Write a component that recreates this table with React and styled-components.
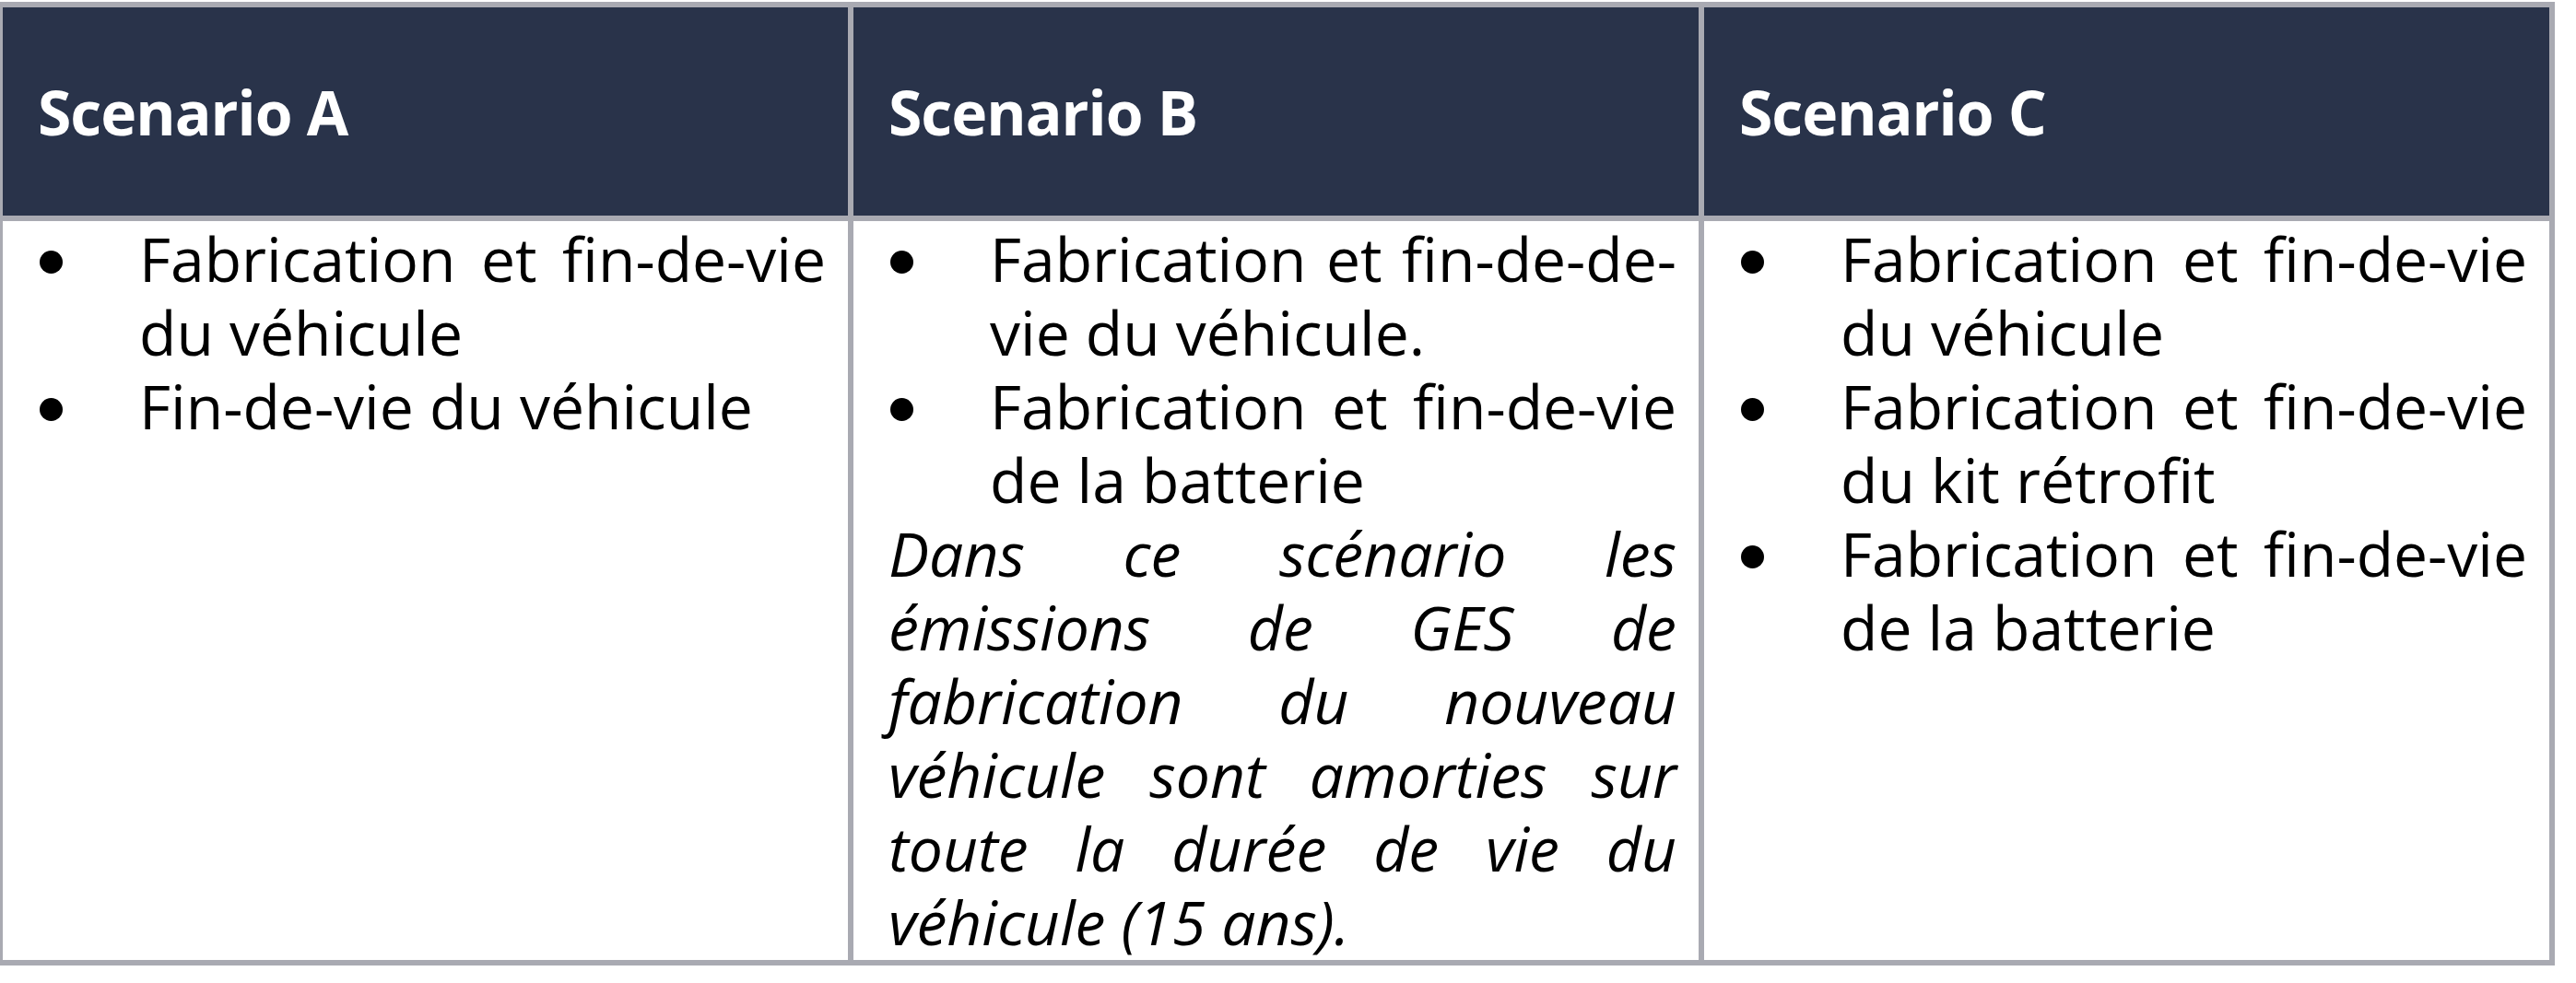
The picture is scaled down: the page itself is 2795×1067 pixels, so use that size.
import React from "react";
import styled, { createGlobalStyle } from "styled-components";

const GlobalStyle = createGlobalStyle`
  body {
    margin: 0;
    background: #ffffff;
  }
`;

const Table = styled.div`
  display: grid;
  grid-template-columns: repeat(3, 917px);
  grid-template-rows: 226px auto;
  gap: 6px;
  padding: 6px;
  width: max-content;
  margin: 2px 0 0 -3px;
  background: #a9aab2;
`;

const HeadCell = styled.div`
  display: flex;
  align-items: center;
  padding-left: 38px;
  background: #29334a;
  color: #ffffff;
  font-family: "Open Sans", "Liberation Sans", sans-serif;
  font-weight: 700;
  font-size: 66px;
  letter-spacing: -1px;
`;

const BodyCell = styled.div`
  padding: 0 24px 2px 38px;
  background: #ffffff;
  color: #000000;
  font-family: "Open Sans", "Liberation Sans", sans-serif;
  font-size: 66px;
  line-height: 80px;
  text-align: justify;
`;

const List = styled.ul`
  margin: 0;
  padding: 0;
  list-style: none;
`;

const Item = styled.li`
  display: grid;
  grid-template-columns: 110px 1fr;
`;

const Dot = styled.span`
  width: 25px;
  height: 25px;
  margin: 32px 0 0 2px;
  border-radius: 50%;
  background: #000000;
`;

const Note = styled.p`
  margin: 0;
  font-style: italic;
`;

const columns = [
  {
    title: "Scenario A",
    items: ["Fabrication et fin-de-vie du véhicule", "Fin-de-vie du véhicule"],
  },
  {
    title: "Scenario B",
    items: [
      "Fabrication et fin-de-de-vie du véhicule.",
      "Fabrication et fin-de-vie de la batterie",
    ],
    note:
      "Dans ce scénario les émissions de GES de fabrication du nouveau véhicule sont amorties sur toute la durée de vie du véhicule (15 ans).",
  },
  {
    title: "Scenario C",
    items: [
      "Fabrication et fin-de-vie du véhicule",
      "Fabrication et fin-de-vie du kit rétrofit",
      "Fabrication et fin-de-vie de la batterie",
    ],
  },
];

const App = () => {
  return (
    <>
      <GlobalStyle />
      <Table>
        {columns.map((col) => (
          <HeadCell key={col.title}>{col.title}</HeadCell>
        ))}
        {columns.map((col) => (
          <BodyCell key={col.title}>
            <List>
              {col.items.map((text) => (
                <Item key={text}>
                  <Dot />
                  <span>{text}</span>
                </Item>
              ))}
            </List>
            {col.note && <Note>{col.note}</Note>}
          </BodyCell>
        ))}
      </Table>
    </>
  );
};

export default App;
